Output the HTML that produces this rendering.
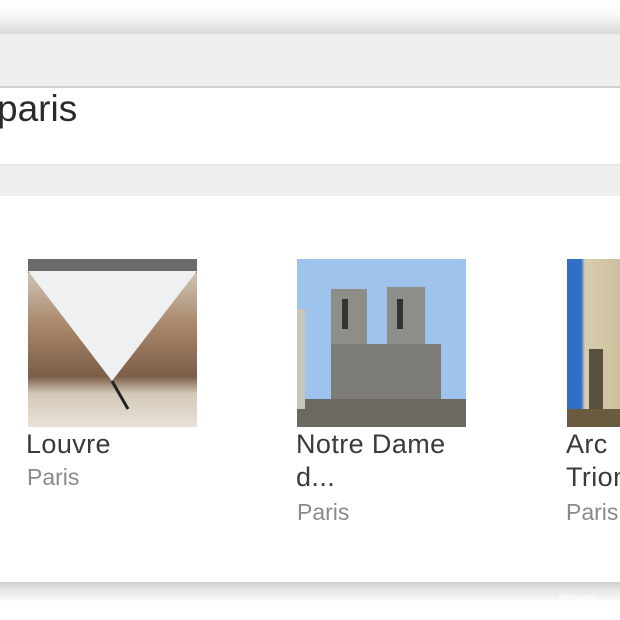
<!DOCTYPE html>
<html><head><meta charset="utf-8"><style>
*{margin:0;padding:0;box-sizing:border-box}
html,body{width:620px;height:620px;overflow:hidden;background:#fff}
body{font-family:"Liberation Sans",Arial,sans-serif}
#w{position:relative;width:620px;height:620px;overflow:hidden}
.a{position:absolute}
.t{font-size:27px;color:#3a3a3a;line-height:33px;letter-spacing:0.4px;white-space:nowrap}
.s{font-size:23px;color:#8a8a8a;line-height:30px;white-space:nowrap}
</style></head><body><div id="w">
<div class="a" style="left:0;top:0;width:620px;height:34px;background:linear-gradient(#fff 0,#fafafa 14px,#e2e2e2 28px,#dcdcdc 34px)"></div>
<div class="a" style="left:0;top:34px;width:620px;height:52px;background:#efefef"></div>
<div class="a" style="left:0;top:86px;width:620px;height:2px;background:#d2d2d2"></div>
<div class="a" style="left:0;top:88px;width:620px;height:76px;background:#fff"></div>
<div class="a" style="left:-3px;top:86px;font-size:37px;color:#2a2a2a;line-height:46px">paris</div>
<div class="a" style="left:0;top:164px;width:620px;height:32px;background:#efefef;border-top:2px solid #e6e6e6"></div>

<div class="a" style="left:28px;top:259px;width:169px;height:168px;background:linear-gradient(#d8d2c8 0,#a8866a 40%,#7a5e48 70%,#d2c8b8 80%,#e8e2d6 100%)">
<svg width="169" height="168" style="position:absolute;left:0;top:0"><rect x="0" y="0" width="169" height="14" fill="#6a6a6a"/><polygon points="0,12 169,12 84,122" fill="#eef0f2"/><line x1="84" y1="122" x2="100" y2="150" stroke="#222" stroke-width="3"/></svg></div>
<div class="a t" style="left:26px;top:428px">Louvre</div>
<div class="a s" style="left:27px;top:462px">Paris</div>

<div class="a" style="left:297px;top:259px;width:169px;height:168px;background:#9ec4ee">
<svg width="169" height="168" style="position:absolute;left:0;top:0"><rect x="34" y="30" width="36" height="138" fill="#8e8e88"/><rect x="90" y="28" width="38" height="140" fill="#8e8e88"/><rect x="34" y="85" width="110" height="83" fill="#7e7c76"/><rect x="0" y="140" width="169" height="28" fill="#6c6a60"/><rect x="0" y="50" width="8" height="100" fill="#c8c4b8"/><rect x="45" y="40" width="6" height="30" fill="#333"/><rect x="100" y="40" width="6" height="30" fill="#333"/></svg></div>
<div class="a t" style="left:296px;top:428px">Notre Dame<br>d...</div>
<div class="a s" style="left:297px;top:497px">Paris</div>

<div class="a" style="left:567px;top:259px;width:53px;height:168px;background:linear-gradient(90deg,#2f6fc8 0,#2f6fc8 14px,#d9cdb0 18px,#cdbf9e 100%)">
<svg width="53" height="168" style="position:absolute;left:0;top:0"><rect x="22" y="90" width="14" height="70" fill="#5a5040"/><rect x="0" y="150" width="53" height="18" fill="#6a5a40"/></svg></div>
<div class="a t" style="left:566px;top:428px">Arc<br>Triomphe</div>
<div class="a s" style="left:566px;top:497px">Paris</div>

<div class="a" style="left:0;top:582px;width:620px;height:20px;background:linear-gradient(#cfcfcf,#e6e6e6 8px,#f4f4f4 16px,#fff)"></div>
<div class="a" style="left:550px;top:590px;font-size:14px;color:#fff;white-space:nowrap">· image</div>
</div></body></html>
